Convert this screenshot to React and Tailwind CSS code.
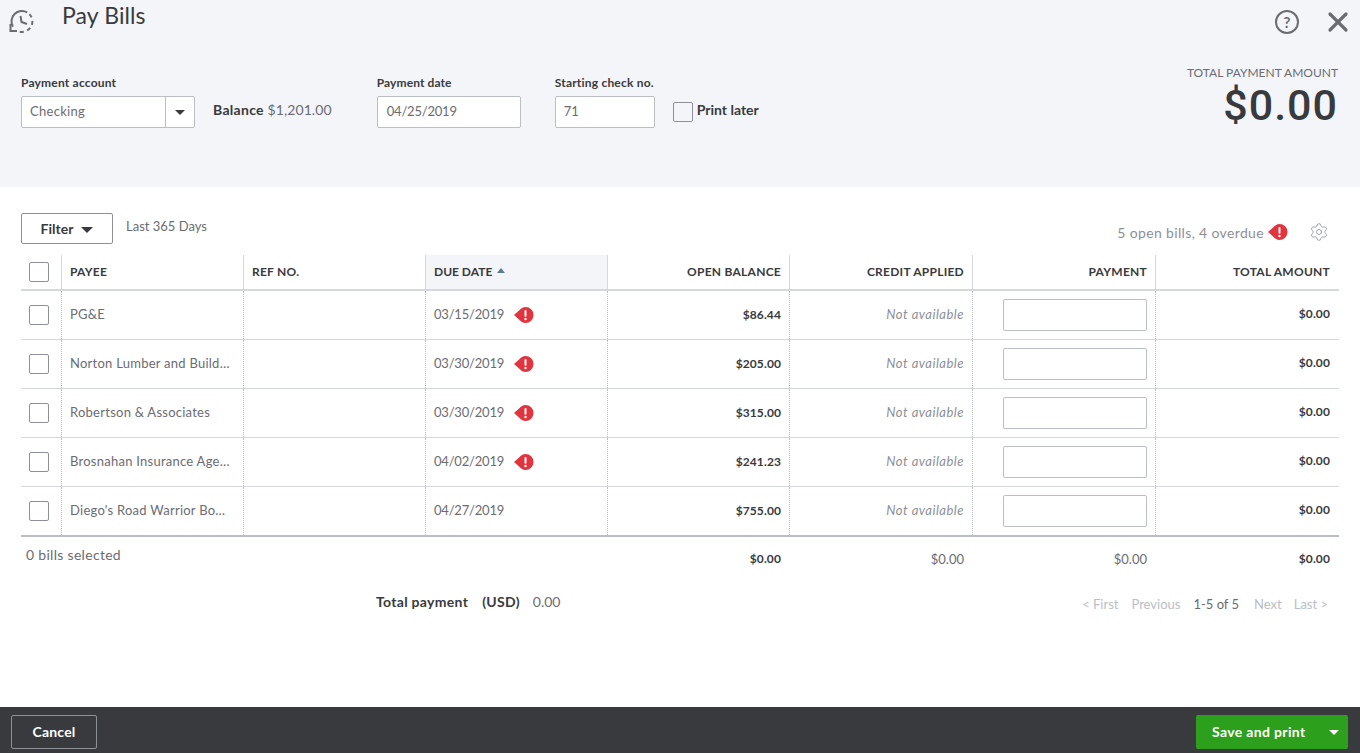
import React from "react";
import { Settings, X } from "lucide-react";

const cols = "grid grid-cols-[40px_182px_182px_182px_182px_183px_183px_184px]";

const bills = [
  { payee: "PG&E", due: "03/15/2019", late: true, open: "$86.44" },
  { payee: "Norton Lumber and Building Materials", due: "03/30/2019", late: true, open: "$205.00" },
  { payee: "Robertson & Associates", due: "03/30/2019", late: true, open: "$315.00" },
  { payee: "Brosnahan Insurance Agency", due: "04/02/2019", late: true, open: "$241.23" },
  { payee: "Diego's Road Warrior Bodyshop", due: "04/27/2019", late: false, open: "$755.00" },
];

function Alert() {
  return (
    <svg width="20" height="16" viewBox="0 0 20 16" className="shrink-0 block">
      <path d="M11.5 0a8 8 0 1 1 0 16c-2.6 0-4.6-1.3-6.2-3.2L0 8l5.3-4.8C6.9 1.3 8.9 0 11.5 0z" fill="#e2343f" />
      <rect x="10.5" y="3" width="2" height="6.8" rx="1" fill="#fff" />
      <circle cx="11.5" cy="12" r="1.2" fill="#fff" />
    </svg>
  );
}

function Caret({ className }) {
  return <span className={`inline-block w-0 h-0 border-x-[5px] border-x-transparent border-t-[5px] ${className}`} />;
}

function Box({ className = "" }) {
  return <span className={`block w-5 h-5 rounded-[2px] border border-[#8d9096] bg-white ${className}`} />;
}

function Th({ children, right, className = "" }) {
  return (
    <div className={`flex items-center px-2 border-l border-[#d4d7dc] text-xs font-bold text-[#393a3d] ${right ? "justify-end" : ""} ${className}`}>
      {children}
    </div>
  );
}

function Td({ children, right, className = "" }) {
  return (
    <div className={`flex items-center min-w-0 px-2 border-l border-dotted border-[#babec5] ${right ? "justify-end" : ""} ${className}`}>
      {children}
    </div>
  );
}

export default function App() {
  return (
    <div className="flex flex-col h-[753px] overflow-hidden bg-white text-[#393a3d] font-['Lato','Open_Sans',sans-serif]">
      <div className="h-[187px] shrink-0 bg-[#f4f5f8] px-[21px]">
        <div className="flex items-start h-[73px]">
          <svg width="28" height="28" viewBox="0 0 28 28" fill="none" stroke="#6b6c72" strokeWidth="2" className="ml-[-13px] mt-[8px]">
            <path d="M4.9 18.75A10.5 10.5 0 0 1 19.25 4.4" />
            <path d="M21.4 6.1A10.5 10.5 0 0 1 8.75 22.6" strokeDasharray="4 3.5" />
            <path d="M12.5 8L13.5 14L19 16" />
            <path d="M2.5 16V23H9" />
          </svg>
          <h1 className="ml-[26px] text-[23px] leading-[30px] tracking-[0.1px] text-[#393a3d]">Pay Bills</h1>
          <div className="ml-auto flex items-center mt-[6px] mr-[-15px]">
            <span className="flex items-center justify-center w-[24px] h-[24px] rounded-full border-2 border-[#6b6c72] text-[15px] font-bold text-[#6b6c72]">?</span>
            <X size={32} strokeWidth={2.4} className="ml-[23px] text-[#6b6c72]" />
          </div>
        </div>
        <div className="flex items-start">
          <div className="w-[174px]">
            <div className="text-xs font-bold leading-[20px] tracking-[0.2px] text-[#393a3d] mb-[3px]">Payment account</div>
            <div className="flex h-8 border border-[#babec5] rounded-[2px] bg-white text-[13px] tracking-[0.3px] text-[#6b6c72]">
              <span className="flex-1 flex items-center px-2 border-r border-[#babec5]">Checking</span>
              <span className="w-[28px] flex items-center justify-center"><Caret className="border-t-[#393a3d]" /></span>
            </div>
          </div>
          <div className="ml-[18px] mt-[27px] text-sm leading-[20px] text-[#6b6c72]">
            <span className="font-bold tracking-[0.3px] text-[#393a3d]">Balance</span> <span className="tracking-[0.1px]">$1,201.00</span>
          </div>
          <div className="w-[144px] ml-[45px]">
            <div className="text-xs font-bold leading-[20px] tracking-[0.1px] mb-[3px]">Payment date</div>
            <div className="flex items-center h-8 pl-[9px] border border-[#babec5] rounded-[2px] bg-white text-[13px] tracking-[-0.2px] text-[#6b6c72]">04/25/2019</div>
          </div>
          <div className="w-[100px] ml-[34px]">
            <div className="text-xs font-bold leading-[20px] tracking-[0.2px] mb-[3px] whitespace-nowrap">Starting check no.</div>
            <div className="flex items-center h-8 px-2 border border-[#babec5] rounded-[2px] bg-white text-[13px] text-[#6b6c72]">71</div>
          </div>
          <div className="flex items-center ml-[18px] mt-[29px]">
            <Box className="!bg-transparent" />
            <span className="ml-1 text-sm font-bold leading-[18px] mt-[-4px]">Print later</span>
          </div>
          <div className="ml-auto text-right mr-[1px] mt-[-10px]">
            <div className="text-xs leading-[20px] text-[#6b6c72]">TOTAL PAYMENT AMOUNT</div>
            <div className="font-['Roboto',sans-serif] font-medium text-[43px] leading-[44px] tracking-[1px] text-[#393a3d]">$0.00</div>
          </div>
        </div>
      </div>

      <div className="flex-1 pl-[21px] pr-[21px]">
        <div className="flex items-start h-[68px] pt-[26px]">
          <button className="flex items-center justify-center w-[92px] h-[31px] border border-[#8d9096] rounded-[2px] text-sm font-bold">
            Filter <span className="ml-2 mt-[2px] inline-block w-0 h-0 border-x-[6px] border-x-transparent border-t-[6px] border-t-[#393a3d]" />
          </button>
          <span className="ml-[13px] mt-[5px] text-[13px] leading-[16px] text-[#6b6c72]">Last 365 Days</span>
          <div className="ml-auto flex items-center mt-[8px] mr-[10px] text-sm tracking-[0.35px] text-[#8d9096]">
            <span className="mt-[2px]">5 open bills, 4 overdue</span>
            <span className="ml-[4px] mr-[21px]"><Alert /></span>
            <Settings size={20} strokeWidth={1} className="text-[#8d9096]" />
          </div>
        </div>

        <div className={`${cols} h-[36px] border-b-[2px] border-[#d4d7dc]`}>
          <div className="flex items-center pl-2"><Box /></div>
          <Th><span className="tracking-[0.25px]">PAYEE</span></Th>
          <Th><span className="tracking-[0.25px]">REF NO.</span></Th>
          <Th className="bg-[#f4f5f8]">DUE DATE <span className="ml-[5px] mb-[3px] inline-block w-0 h-0 border-x-[4px] border-x-transparent border-b-[5px] border-b-[#5f7a95]" /></Th>
          <Th right><span className="tracking-[0.25px]">OPEN BALANCE</span></Th>
          <Th right><span className="tracking-[0.25px]">CREDIT APPLIED</span></Th>
          <Th right><span className="tracking-[0.25px]">PAYMENT</span></Th>
          <Th right className="pr-[9px]"><span className="tracking-[0.25px]">TOTAL AMOUNT</span></Th>
        </div>

        {bills.map((bill, i) => (
          <div key={bill.payee} className={`${cols} border-b ${i === bills.length - 1 ? "border-b-[2px] border-[#babec5] h-[50px]" : "h-[49px] border-[#d4d7dc]"} text-[13px] text-[#6b6c72]`}>
            <div className="flex items-center pl-2"><Box /></div>
            <Td><span className="truncate mr-[3px] tracking-[0.25px]">{bill.payee}</span></Td>
            <Td />
            <Td>
              <span className="tracking-[-0.2px]">{bill.due}</span>
              {bill.late && <span className="ml-[10px]"><Alert /></span>}
            </Td>
            <Td right className="text-xs font-bold tracking-[0.1px] text-[#393a3d]">{bill.open}</Td>
            <Td right className="italic tracking-[0.5px] text-[#8d9096]">Not available</Td>
            <Td right><span className="block w-[144px] h-8 border border-[#babec5] rounded-[2px] bg-white" /></Td>
            <Td right className="text-xs font-bold tracking-[0.1px] pr-[9px] pb-[2px] text-[#393a3d]">$0.00</Td>
          </div>
        ))}

        <div className={`${cols} h-[43px] text-[13px]`}>
          <div className="col-span-4 pl-[5px] pt-[8px] text-sm leading-[20px] text-[#6b6c72] tracking-[0.3px]">0 bills selected</div>
          <div className="px-2 pt-[14px] text-right text-xs font-bold tracking-[0.1px] leading-[16px]">$0.00</div>
          <div className="px-2 pt-[14px] text-right text-[13px] leading-[16px] text-[#6b6c72]">$0.00</div>
          <div className="px-2 pt-[14px] text-right text-[13px] leading-[16px] text-[#6b6c72]">$0.00</div>
          <div className="pl-2 pr-[9px] pt-[14px] text-right text-xs font-bold tracking-[0.1px] leading-[16px]">$0.00</div>
        </div>

        <div className="flex items-center h-[44px] text-sm">
          <span className="ml-[355px] font-bold tracking-[0.3px]">Total payment</span>
          <span className="ml-[14px] font-bold tracking-[0.3px]">(USD)</span>
          <span className="ml-[13px] text-[#6b6c72]">0.00</span>
          <div className="ml-auto mr-[11px] mt-[4px] flex text-[13px] text-[#babec5]">
            <span>&lt; First</span>
            <span className="ml-[13px]">Previous</span>
            <span className="ml-[13px] text-[#6b6c72]">1-5 of 5</span>
            <span className="ml-[15px]">Next</span>
            <span className="ml-[12px]">Last &gt;</span>
          </div>
        </div>
      </div>

      <div className="flex items-center justify-between h-[46px] shrink-0 bg-[#393a3d] pl-[11px] pr-3 pt-[4px]">
        <button className="w-[86px] h-[34px] border border-[#8d9096] rounded-[2px] text-sm font-bold tracking-[0.2px] text-white">Cancel</button>
        <button className="flex items-center w-[152px] h-[34px] rounded-[2px] bg-[#2ca01c] text-sm font-bold tracking-[0.35px] text-white">
          <span className="flex-1 text-left pl-4">Save and print</span>
          <Caret className="mr-[9px] border-t-white" />
        </button>
      </div>
    </div>
  );
}
